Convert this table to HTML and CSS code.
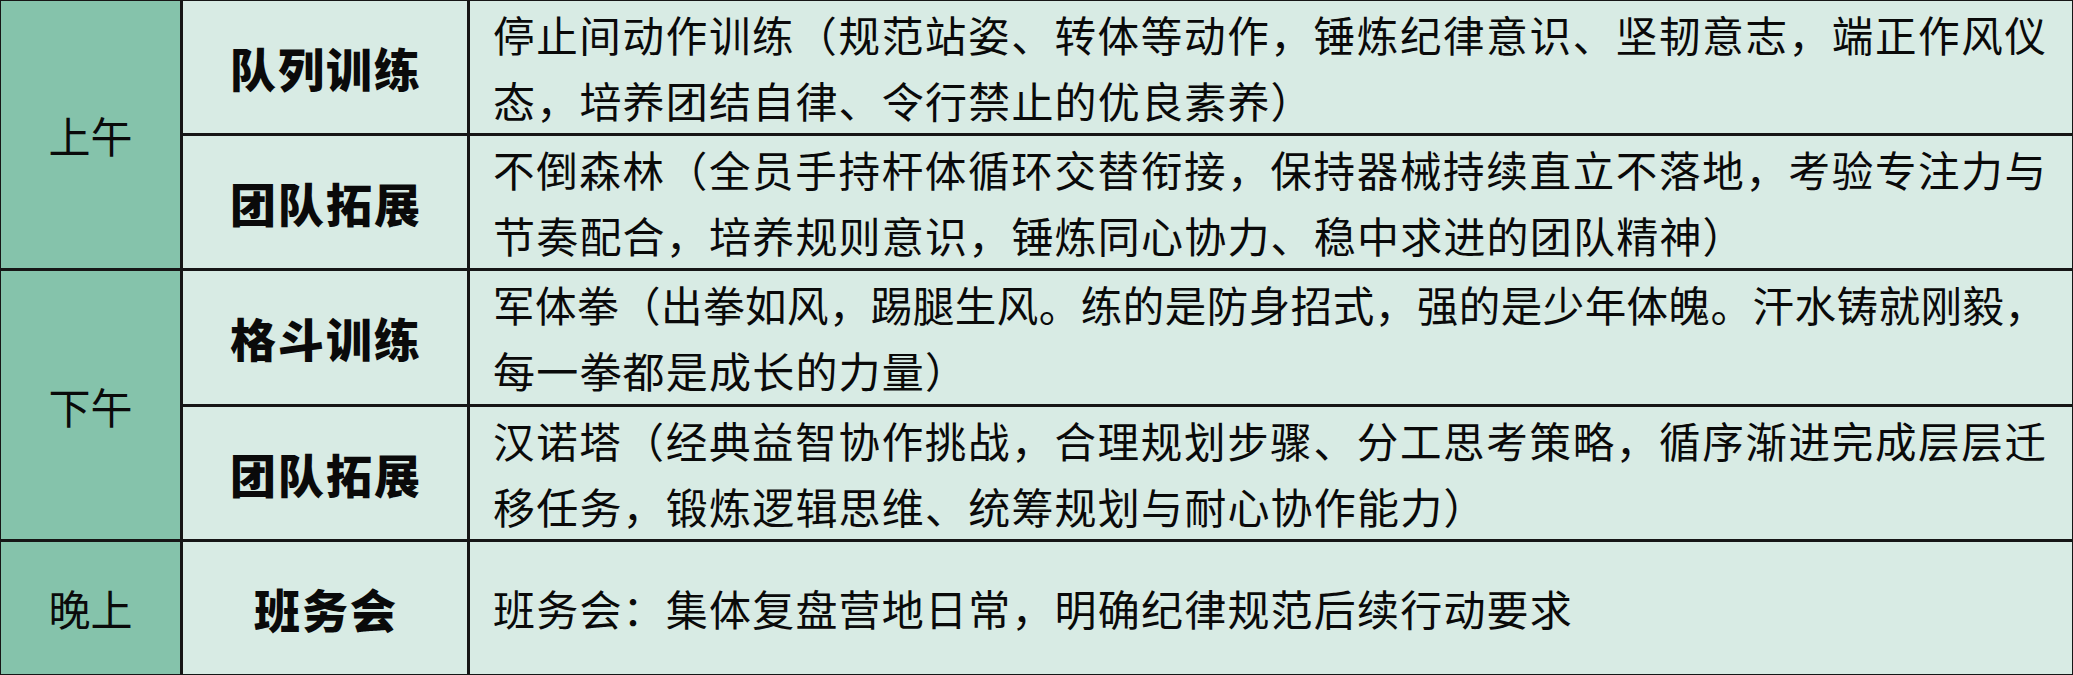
FILE: index.html
```html
<!DOCTYPE html>
<html lang="zh-CN">
<head>
<meta charset="utf-8">
<title>营地日程</title>
<link rel="stylesheet" href="styles.css">
</head>
<body>
<div class="schedule">
  <div class="period span2">上午</div>
  <div class="activity">队列训练</div>
  <div class="desc">
    <span class="ln full">停止间动作训练（规范站姿、转体等动作，锤炼纪律意识、坚韧意志，端正作风仪</span>
    <span class="ln">态，培养团结自律、令行禁止的优良素养）</span>
  </div>
  <div class="activity">团队拓展</div>
  <div class="desc">
    <span class="ln full">不倒森林（全员手持杆体循环交替衔接，保持器械持续直立不落地，考验专注力与</span>
    <span class="ln">节奏配合，培养规则意识，锤炼同心协力、稳中求进的团队精神）</span>
  </div>
  <div class="period span2">下午</div>
  <div class="activity">格斗训练</div>
  <div class="desc">
    <span class="ln full">军体拳（出拳如风，踢腿生风。练的是防身招式，强的是少年体魄。汗水铸就刚毅，</span>
    <span class="ln">每一拳都是成长的力量）</span>
  </div>
  <div class="activity">团队拓展</div>
  <div class="desc">
    <span class="ln full">汉诺塔（经典益智协作挑战，合理规划步骤、分工思考策略，循序渐进完成层层迁</span>
    <span class="ln">移任务，锻炼逻辑思维、统筹规划与耐心协作能力）</span>
  </div>
  <div class="period">晚上</div>
  <div class="activity">班务会</div>
  <div class="desc">
    <span class="ln">班务会：集体复盘营地日常，明确纪律规范后续行动要求</span>
  </div>
</div>
</body>
</html>
```
FILE: styles.css
```css
html, body {
  margin: 0;
  padding: 0;
  background: #ffffff;
}

.schedule {
  box-sizing: border-box;
  width: 2073px;
  height: 675px;
  display: grid;
  grid-template-columns: 179px 284px 1602px;
  grid-template-rows: repeat(5, minmax(0, 1fr));
  gap: 3px;
  padding: 1px;
  background: #161616;
  font-family: "Noto Sans CJK SC", "Noto Sans", sans-serif;
  color: #0a0a0a;
}

.period {
  background: #85c3ab;
  display: flex;
  align-items: center;
  justify-content: center;
  font-size: 42px;
  font-weight: 400;
  letter-spacing: 0;
}

.span2 {
  grid-row: span 2;
}

.activity {
  background: #d8ebe4;
  display: flex;
  align-items: center;
  justify-content: center;
  font-size: 46px;
  font-weight: 900;
  letter-spacing: 2px;
  padding-left: 2px;
}

.desc {
  background: #d8ebe4;
  min-height: 0;
  display: flex;
  flex-direction: column;
  justify-content: center;
  padding: 0 26px 0 23px;
  font-size: 42px;
  font-weight: 400;
}

.ln {
  display: block;
  flex: none;
  line-height: 66px;
  white-space: nowrap;
  letter-spacing: 1.2px;
}

.ln.full {
  letter-spacing: 0;
  font-size: 41.5px;
  text-align: justify;
  text-align-last: justify;
  white-space: normal;
}
```
